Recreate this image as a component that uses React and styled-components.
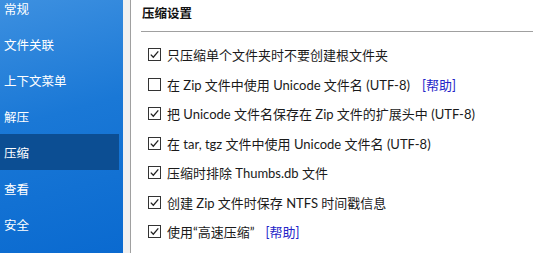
import React from 'react';
import styled, { createGlobalStyle } from 'styled-components';

const Global = createGlobalStyle`
  html, body { margin: 0; padding: 0; background: #fff; }
  body { font-family: "Noto Sans CJK SC", "Noto Sans", sans-serif; overflow: hidden; }
`;

const Wrapper = styled.div`
  display: flex;
  width: 533px;
  height: 253px;
  overflow: hidden;
`;

const Sidebar = styled.div`
  width: 123px;
  flex: none;
  background: linear-gradient(165deg, #3d90e0 0%, #1a78d6 45%, #0a6ad0 100%);
  overflow: hidden;
`;

const MenuList = styled.div`
  margin-top: -10px;
  display: flex;
  flex-direction: column;
`;

const MenuItem = styled.div`
  height: 36px;
  display: flex;
  align-items: center;
  padding-left: 4px;
  margin-right: 4px;
  color: #fff;
  font-size: 12.5px;
  background: ${p => (p.active ? '#0c4e93' : 'transparent')};
`;

const Strip = styled.div`
  width: 7px;
  flex: none;
  background: #f0f0f0;
  border-right: 1px solid #a0a0a0;
`;

const Content = styled.div`
  flex: 1;
  padding-left: 10px;
`;

const Title = styled.div`
  height: 25px;
  display: flex;
  align-items: center;
  padding-left: 1px;
  font-size: 12.5px;
  font-weight: bold;
  color: #111;
`;

const Separator = styled.div`
  height: 1px;
  background: #a0a0a0;
  margin-top: 6px;
  margin-bottom: 8px;
`;

const Options = styled.div`
  display: flex;
  flex-direction: column;
  padding-left: 7px;
`;

const Row = styled.label`
  height: 29.5px;
  display: flex;
  align-items: center;
  font-family: Lato, "Noto Sans CJK SC", sans-serif;
  font-size: 13px;
  color: #1a1a1a;
  white-space: pre;
`;

const Box = styled.span`
  width: 11px;
  height: 11px;
  border: 1px solid #333;
  background: #fff;
  margin-right: 6px;
  display: flex;
  align-items: center;
  justify-content: center;
  flex: none;
`;

const Help = styled.span`
  color: #2424c8;
  margin-left: ${p => p.gap || 12}px;
`;

const Check = ({ checked }) => (
  <Box>
    {checked && (
      <svg width="11" height="11" viewBox="0 0 11 11">
        <path d="M1.8 5.6 L4.3 8.2 L9.3 2.4" fill="none" stroke="#222" strokeWidth="1.3" />
      </svg>
    )}
  </Box>
);

const menu = ['常规', '文件关联', '上下文菜单', '解压', '压缩', '查看', '安全'];

const options = [
  { checked: true, text: '只压缩单个文件夹时不要创建根文件夹' },
  { checked: false, text: '在 Zip 文件中使用 Unicode 文件名 (UTF-8)', help: true, gap: 12 },
  { checked: true, text: '把 Unicode 文件名保存在 Zip 文件的扩展头中 (UTF-8)' },
  { checked: true, text: '在 tar, tgz 文件中使用 Unicode 文件名 (UTF-8)' },
  { checked: true, text: '压缩时排除 Thumbs.db 文件' },
  { checked: true, text: '创建 Zip 文件时保存 NTFS 时间戳信息' },
  { checked: true, text: '使用“高速压缩”', help: true, gap: 11 },
];

export default function App() {
  return (
    <Wrapper>
      <Global />
      <Sidebar>
        <MenuList>
          {menu.map((m, i) => (
            <MenuItem key={m} active={i === 4}>{m}</MenuItem>
          ))}
        </MenuList>
      </Sidebar>
      <Strip />
      <Content>
        <Title>压缩设置</Title>
        <Separator />
        <Options>
          {options.map((o, i) => (
            <Row key={i}>
              <Check checked={o.checked} />
              {o.text}
              {o.help && <Help gap={o.gap}>[帮助]</Help>}
            </Row>
          ))}
        </Options>
      </Content>
    </Wrapper>
  );
}
